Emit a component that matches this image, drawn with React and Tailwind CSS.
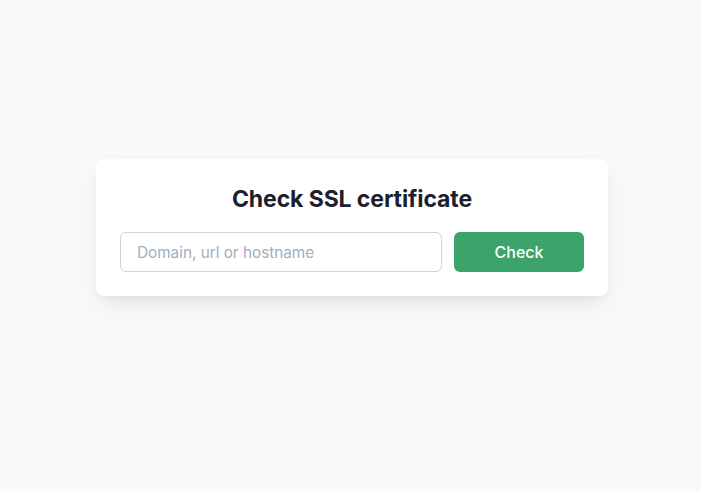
import React, { useState } from 'react';

const App = () => {
  const [domain, setDomain] = useState('');

  return (
    <div className="min-h-screen bg-[#f8f9fb] flex items-center justify-center pb-[36px] pl-[3px]" style={{ fontFamily: 'Inter, "Noto Sans", sans-serif' }}>
      <div className="w-[512px] bg-white rounded-lg p-6 shadow-[0_10px_25px_-5px_rgba(0,0,0,0.1),0_6px_10px_-6px_rgba(0,0,0,0.06)]">
        <h1 className="text-center text-[23px] leading-8 font-bold text-[#1a202c] mb-[17px] tracking-[-0.1px]">Check SSL certificate</h1>
        <form className="flex gap-3" onSubmit={(e) => e.preventDefault()}>
          <input
            type="text"
            value={domain}
            onChange={(e) => setDomain(e.target.value)}
            placeholder="Domain, url or hostname"
            className="flex-1 min-w-0 h-10 border border-[#cbd5e0] rounded-md px-4 text-[15.3px] text-[#2d3748] placeholder-[#a0aec0] outline-none"
          />
          <button type="submit" className="w-[130px] h-10 bg-[#3ca46a] text-white text-base font-medium rounded-md">
            Check
          </button>
        </form>
      </div>
    </div>
  );
};

export default App;
